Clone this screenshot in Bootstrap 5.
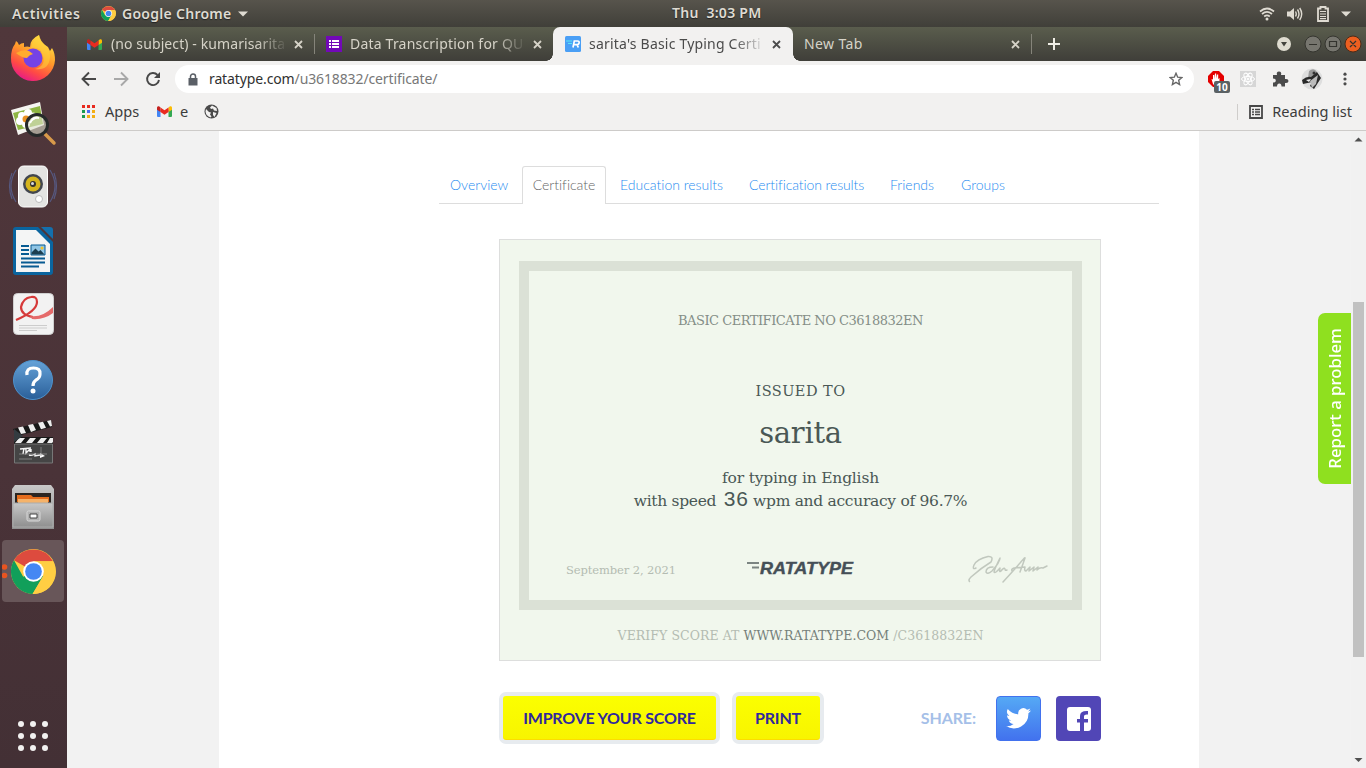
<!DOCTYPE html>
<html lang="en">
<head>
<meta charset="utf-8">
<title>sarita's Basic Typing Certificate</title>
<link href="https://cdn.jsdelivr.net/npm/bootstrap@5.3.0/dist/css/bootstrap.min.css" rel="stylesheet">
<style>
body{width:1366px;height:768px;overflow:hidden;font-family:"Noto Sans","Open Sans",sans-serif;font-size:14px;line-height:20px;color:#3c3c3c;background:#f1f1f1}
svg{display:block;flex:none}
.topbar{height:27px;background:linear-gradient(#57544c,#403f39);color:#dfdbd2;font-weight:600;font-size:14px;padding-left:12px;text-shadow:0 1px 1px #222}
.activities{letter-spacing:.6px;width:68px;white-space:nowrap}
.appname{letter-spacing:.28px;margin-left:6px}
.topbar .clock{left:672px;top:3px;white-space:pre;letter-spacing:.27px}
.dock{width:67px;height:741px;background:linear-gradient(#50373b,#4a3338 60%,#433035);padding:1px 3px 0 2px;gap:2px}
.dock-item{width:62px;height:62px;flex:none}
.dock-item.running{background:#685659;border-radius:4px}
.tabstrip{height:34px;background:linear-gradient(#5a5d4d,#3f3e39);color:#d6d3c8}
.tab-label{white-space:nowrap;overflow:hidden;width:177px;height:20px}
.fade-end{-webkit-mask-image:linear-gradient(90deg,#000 145px,transparent 177px);mask-image:linear-gradient(90deg,#000 145px,transparent 177px)}
.ctab{height:34px;padding-left:12px}
.ctab.active{width:240px;background:#f2f1f0;color:#4b4b4b;border-radius:7px 7px 0 0;position:relative}
.ctab.active::before,.ctab.active::after{content:"";position:absolute;bottom:0;width:7px;height:7px}
.ctab.active::before{left:-7px;background:radial-gradient(circle at 0 0,transparent 6.500px,#f2f1f0 7px)}
.ctab.active::after{right:-7px;background:radial-gradient(circle at 100% 0,transparent 6.500px,#f2f1f0 7px)}
.tabsep{width:1px;height:20px;background:#85847a}
.toolbar{height:36px;background:#f2f1f0}
.omni{width:1019px;height:28px;border-radius:14px;background:#fff;color:#777;letter-spacing:-.12px}
.bookmarks{height:34px;background:#f2f1f0;border-bottom:1px solid #cdcbc9;padding-bottom:4px;font-size:14.6px}
.bookmarks>span{padding-bottom:2px}
.viewport{height:637px;background:#f2f2f2}
.sheet{width:980px;margin-left:152px;background:#fff;padding-left:220px;padding-top:35px}
.profile-tabs{width:720px;height:38px;border-bottom:1px solid #ddd;font:300 14px/38px Lato,"Open Sans",sans-serif;font-variant-ligatures:none}
.profile-tabs a{color:#1f8cf0;text-decoration:none;white-space:nowrap}
.profile-tabs a.current{color:#666;height:38px;width:84px;border:1px solid #ddd;border-bottom:0;background:#fff;border-radius:3px 3px 0 0;text-align:center;line-height:36px}
.cert{width:602px;height:422px;margin:35px 0 0 60px;border:1px solid #dddedd;background:#f1f7ed;padding:21px 18px 0 19px;font-family:"DejaVu Serif","Liberation Serif",serif;color:#4a5855;white-space:nowrap}
.frame{width:563px;height:349px;border:10px solid #dbe1d6;text-align:center}
.ln{height:20px;line-height:20px}
.no{margin-top:40px;font-size:13px;color:#848e87;letter-spacing:-.48px}
.issued{margin-top:50px;font-size:14.5px;letter-spacing:.45px}
.name{margin-top:10px;height:44px;line-height:44px;font-size:29px;letter-spacing:-.3px}
.l1{margin-top:12px;height:22px;line-height:22px;font-size:15.5px;letter-spacing:-.2px}
.l2{height:22px;line-height:21px;font-size:15.5px;letter-spacing:-.3px}
.l2 b{font:21px/20px "Liberation Sans",sans-serif;letter-spacing:.6px;margin-left:3px}
.bottomline{margin-top:42px;height:32px;padding:0 23px 0 37px}
.date{font-size:11.5px;color:#b4bcb2;letter-spacing:-.1px;padding-top:2px}
.verify{margin-top:16px;font-size:12.5px;color:#b4bcb2;text-align:center;letter-spacing:.06px}
.verify b{font-weight:400;color:#75807a}
.actions{margin:31px 0 0 60px;width:602px;font-family:Lato,sans-serif;font-weight:700}
.cta{height:52px;border:4px solid #e7ebef;border-radius:7px;background:linear-gradient(#fbff00,#f8f400);box-shadow:inset 0 -1px #fddc00;color:#30289c;font-size:16px;line-height:44px;text-align:center;padding:0;font-weight:700;letter-spacing:-.2px}
.share{font-size:16px;color:#a5bfe8;letter-spacing:-.1px}
.soc{width:45px;height:45px;border-radius:4px;margin-top:1px}
.tw{background:linear-gradient(#55a9f5,#4272ee);border:1px solid #4272ee}
.fb{background:#5146b6}
.sbar{width:15px;height:637px;background:#f1f1f1}
.thumb{width:11px;height:355px;background:#c1c1c1;top:171px;left:2px}
.report{width:33px;height:171px;left:1251px;top:182px;background:#8fe01f;border-radius:7px 0 0 7px;color:#fff}
.report span{writing-mode:vertical-rl;transform:rotate(180deg);font:500 16.8px/31px "Noto Sans",sans-serif;white-space:nowrap}
.count{left:6px;top:10px;width:16px;height:12px;border-radius:2px;background:#5a6164;color:#fff;font:700 10px/12px "Noto Sans",sans-serif;text-align:center}
</style>
</head>
<body>
<svg width="0" height="0" class="position-absolute"><defs>
<symbol id="chrome" viewBox="0 0 48 48"><circle cx="24" cy="24" r="24" fill="#ffce43"/><path d="M24 24L3.200 12A24 24 0 0 1 44.800 13H24z" fill="#dd4b3e"/><path d="M24 24L13 29.500 3.200 12A24 24 0 0 0 23 48L34.500 29z" fill="#119f5a"/><path d="M24 13H44.800A24 24 0 0 1 23 48L34 29z" fill="#ffce43"/><circle cx="24" cy="24" r="11" fill="#fff"/><circle cx="24" cy="24" r="8.900" fill="#4587f3"/></symbol>
<symbol id="gmail" viewBox="0 0 15 12"><path d="M0 2v9q0 1 1 1h2.500V4z" fill="#4285f4"/><path d="M15 2v9q0 1-1 1h-2.500V4z" fill="#34a853"/><path d="M11.500 1.500L13 .4q2-.8 2 1.600v2l-3.500 2.600z" fill="#fbbc04"/><path d="M3.500 1.500L2 .4Q0-.4 0 2v2l3.500 2.600z" fill="#c5221f"/><path d="M3.500 1.500l4 3 4-3v5.100l-4 3-4-3z" fill="#ea2b20"/></symbol>
<symbol id="x" viewBox="0 0 9 9"><path d="M1 1l7 7M8 1l-7 7" stroke="currentColor" stroke-width="1.800"/></symbol>
</defs></svg>

<header class="topbar d-flex align-items-center position-relative">
  <span class="activities">Activities</span>
  <svg width="15" height="15" style="margin-left:21px"><use href="#chrome"/></svg>
  <span class="appname">Google Chrome</span>
  <svg width="10" height="6" style="margin-left:6px"><path d="M0 .5h10l-5 5z" fill="#dfdbd2"/></svg>
  <span class="clock position-absolute">Thu  3:03 PM</span>
  <div class="d-flex align-items-center ms-auto" style="margin-right:15px">
    <svg width="16" height="16" fill="none" stroke="#dfdbd2" stroke-width="1.700"><path d="M1 5.500Q8-.5 15 5.500M3 8q5-4.300 10 0M5.200 10.500q2.800-2.300 5.600 0"/><circle cx="8" cy="13" r="1.500" fill="#dfdbd2" stroke="none"/></svg>
    <svg width="16" height="14" style="margin-left:12px"><path d="M0 4.500h3L7 1v12L3 9.500H0z" fill="#dfdbd2"/><path d="M8.500 4.500q1.500 2.500 0 5M10.500 2.500q3 4.500 0 9M12.700 1q4 6 0 12" fill="none" stroke="#dfdbd2" stroke-width="1.400"/></svg>
    <svg width="12" height="16" style="margin-left:14px" fill="none" stroke="#dfdbd2"><path d="M1 2.500h2.500V1h5v1.500H11V15H1z" stroke-width="1.800"/><path d="M3 5.500h6M3 8h6M3 10.500h6M3 12.700h6" stroke-width="1.200"/></svg>
    <svg width="10" height="6" style="margin-left:12px"><path d="M0 .5h10l-5 5z" fill="#dfdbd2"/></svg>
  </div>
</header>

<div class="d-flex">
<nav class="dock d-flex flex-column">
  <svg class="dock-item" viewBox="0 0 62 62"><defs><linearGradient id="ff" x1=".8" y1="0" x2=".3" y2="1"><stop offset="0" stop-color="#fff04a"/><stop offset=".45" stop-color="#ff9a2a"/><stop offset=".75" stop-color="#ff4b44"/><stop offset="1" stop-color="#e5188b"/></linearGradient></defs><path d="M9 30q0-9 4-14l1-3q2 1 3 4 2-2 5-2v4q3-1 6 0 0-8 9-12 1 6 6 10l3 2 2 4 2-3q3 5 3 12A22 22 0 0 1 9 30z" fill="url(#ff)"/><circle cx="31" cy="30" r="9.500" fill="#7542e5"/><path d="M14 25q7-4 13-2l4 3q-4 1-6 4-5 0-11-5z" fill="#ffac2d"/><path d="M29 20q10-2 12 8 3 10-8 13 14 2 15-12 0-9-6-13-4-4-5-9-6 4-8 13z" fill="#ffd33a" opacity=".55"/></svg>
  <svg class="dock-item" viewBox="0 0 62 62"><path d="M9 18l29-8 4 23-26 10z" fill="#f5f5f1"/><path d="M11 21l27-7 3 18-25 6z" fill="#8eb643"/><g fill="#fff"><circle cx="20" cy="24" r="4"/><circle cx="26" cy="21" r="4"/><circle cx="18" cy="29" r="4"/><circle cx="24" cy="32" r="4"/><circle cx="31" cy="24" r="3.500"/></g><circle cx="24" cy="27" r="3.500" fill="#e99021"/><path d="M43 42l9 9" stroke="#d89a4a" stroke-width="3.500" stroke-linecap="round"/><circle cx="35" cy="33" r="10.500" fill="#dfe3cf" fill-opacity=".6" stroke="#262a2a" stroke-width="3"/><path d="M28 31q3-6 9-5" stroke="#fff" stroke-width="2" fill="none"/></svg>
  <svg class="dock-item" viewBox="0 0 62 62"><g fill="none" stroke="#56587f" stroke-width="1.200"><path d="M14 14q-10 16 0 32M48 14q10 16 0 32M10 17q-5 13 0 26M52 17q5 13 0 26"/></g><rect x="16.500" y="10" width="29" height="41" rx="5" fill="#e4e4e2" stroke="#fff"/><circle cx="31" cy="28" r="10" fill="#42474e"/><circle cx="31" cy="28" r="7.500" fill="#d5b51d"/><circle cx="31" cy="28" r="3" fill="#333"/><circle cx="30.500" cy="27.500" r="1.500" fill="#ddd"/><circle cx="37" cy="43" r="3.500" fill="#fff" stroke="#bbb"/></svg>
  <svg class="dock-item" viewBox="0 0 62 62"><path d="M14 7h22l15 15v30q0 3-3 3H14q-3 0-3-3V10q0-3 3-3z" fill="#0a659f"/><path d="M39 7h9q3 0 3 3v9z" fill="#1470ad"/><path d="M14 10h20l14 14v28H14z" fill="#f4f5f5"/><path d="M19 26h8M19 30h8M19 34h8M19 38.500h24M19 42.500h24M19 46.500h18" stroke="#075b92" stroke-width="2"/><path d="M29 25h14v10H29z" fill="#8fc5e5" stroke="#075b92"/><path d="M29.500 34.500v-2l4-4 3 3 2-1.500 4 4.500z" fill="#1b3e50"/><circle cx="40" cy="28" r="1.500" fill="#f3c42b"/></svg>
  <svg class="dock-item" viewBox="0 0 62 62"><rect x="11.500" y="9.500" width="40" height="41" rx="4" fill="#f2f2f2" stroke="#d0d0d0"/><path d="M14 36Q35 27 35 18q0-6-6-5-8 1-10 10 0 8 12 10" fill="none" stroke="#d63a3a" stroke-width="2.200"/><path d="M28 32q12 2 23-9v6q-9 7-21 6z" fill="#e56a6a"/><path d="M17 41.500h28M17 44h28M17 46.500h18" stroke="#ccc"/></svg>
  <svg class="dock-item" viewBox="0 0 62 62"><defs><linearGradient id="hb" x2="0" y2="1"><stop stop-color="#65a2d8"/><stop offset="1" stop-color="#2a5f99"/></linearGradient></defs><circle cx="31" cy="32" r="19.500" fill="url(#hb)" stroke="#4d93ce"/><path d="M25 27q-1-7 6.500-7 7 0 6.500 6 0 4-4 6-3 2-3 6" fill="none" stroke="#fff" stroke-width="3.200"/><circle cx="31" cy="43" r="2.500" fill="#fff"/></svg>
  <svg class="dock-item" viewBox="0 0 62 62"><path d="M11 17L49 8l1 7-35 9z" fill="#191919"/><path d="M16 15.500l5-1 3 6.500-5 1zM26 13l5-1 3 6-5 2zM36 10.800l5-1 3 6-5 1.500zM45 9l4-1 1 6-2 .5z" fill="#eee"/><path d="M12 25h39v7H12z" fill="#191919"/><path d="M17 26h6l-4 5h-6zM28 26h6l-4 5h-6zM39 26h6l-4 5h-6zM48 26h3v4l-1 1h-5z" fill="#eee"/><path d="M12.500 32h38v19h-38z" fill="#454545" stroke="#777"/><path d="M12 17l9 7-9 6z" fill="#333b40"/><path d="M18 37l11-1M22 36l-1 6M24 37v4l4-4v3M29 37v3M27 43q3 1 6-1v2l5-1" fill="none" stroke="#f5f5f5" stroke-width="1.400"/><path d="M38 41l5 3-5 2z" fill="#fff"/><path d="M17 42h28M17 47h13M39 35v9" stroke="#999" stroke-width=".7"/></svg>
  <svg class="dock-item" viewBox="0 0 62 62"><defs><linearGradient id="fc" x2="0" y2="1"><stop stop-color="#c8c8c8"/><stop offset="1" stop-color="#8f8f8f"/></linearGradient></defs><path d="M13 9h36l3 4v40H10V13z" fill="url(#fc)"/><path d="M13 17h36v10H13z" fill="#2b2521"/><path d="M15 19h14l2 2h16v5H15z" fill="#e56d1d"/><path d="M16 23h30v4H16z" fill="#f5b36a"/><path d="M11 27h40v24H11z" fill="url(#fc)" stroke="#aaa"/><rect x="25" y="35" width="13" height="10" rx="1.500" fill="#b1b1b1" stroke="#d8d8d8"/><path d="M28 38h7v4h-7z" fill="#fff" stroke="#444"/></svg>
  <div class="dock-item running d-flex align-items-center">
    <svg width="7" height="20"><circle cx="2.500" cy="6" r="2.800" fill="#e95420"/><circle cx="2.500" cy="14.500" r="2.800" fill="#e95420"/></svg>
    <svg width="45" height="45" style="margin-left:2px"><use href="#chrome"/></svg>
  </div>
  <svg class="dock-item mt-auto" viewBox="0 0 62 62"><g fill="#f2f1f0"><circle cx="19" cy="30" r="3"/><circle cx="31" cy="30" r="3"/><circle cx="43" cy="30" r="3"/><circle cx="19" cy="42" r="3"/><circle cx="31" cy="42" r="3"/><circle cx="43" cy="42" r="3"/><circle cx="19" cy="18" r="3"/><circle cx="31" cy="18" r="3"/><circle cx="43" cy="18" r="3"/></g></svg>
</nav>

<div class="flex-grow-1">
  <div class="tabstrip d-flex align-items-center">
    <div class="d-flex align-items-center" style="width:247px;padding-left:20px">
      <svg width="15" height="11" viewBox="0 0 15 12" preserveAspectRatio="none"><use href="#gmail"/></svg>
      <div class="tab-label fade-end" style="margin-left:9px;letter-spacing:.1px">(no subject) - kumarisarita</div>
      <svg width="9" height="9" style="margin-left:6px"><use href="#x"/></svg>
    </div>
    <div class="tabsep"></div>
    <div class="d-flex align-items-center" style="width:238px;padding-left:11px">
      <svg width="16" height="16"><path d="M0 0h16v16H0z" fill="#7209b7"/><path d="M3 4h2v2H3zM3 7h2v2H3zM3 10h2v2H3zM6 4h7v2H6zM6 7h7v2H6zM6 10h7v2H6z" fill="#fff"/></svg>
      <div class="tab-label fade-end" style="margin-left:8px;width:178px;letter-spacing:.2px">Data Transcription for QU</div>
      <svg width="9" height="9" style="margin-left:5px"><use href="#x"/></svg>
    </div>
    <div class="ctab active d-flex align-items-center">
      <svg width="16" height="16"><rect width="16" height="16" rx="1.500" fill="#4a9ff5"/><path d="M1 5h6M3 7.500h4" stroke="#56e8f5" stroke-width="1.200"/><path d="M8 11.500L9.300 5h3.200q2 0 1.600 2-.3 1.500-2 1.700l1.200 2.800M9 8.700h3" stroke="#fff" stroke-width="1.700" fill="none"/></svg>
      <div class="tab-label fade-end" style="margin-left:8px;letter-spacing:.2px">sarita's Basic Typing Certi</div>
      <svg width="9" height="9" style="margin-left:6px"><use href="#x"/></svg>
    </div>
    <span style="margin-left:11px;width:207px;letter-spacing:.4px">New Tab</span>
    <svg width="9" height="9"><use href="#x"/></svg>
    <div class="tabsep" style="margin-left:11px"></div>
    <svg width="12" height="12" style="margin-left:16px"><path d="M6 0v12M0 6h12" stroke="#f0eee6" stroke-width="2"/></svg>
    <div class="d-flex align-items-center ms-auto" style="margin-right:4px">
      <svg width="14" height="14" style="margin-right:13px"><circle cx="7" cy="7" r="7" fill="#dfdcd0"/><path d="M4 5h6l-3 4.500z" fill="#44443d"/></svg>
      <svg width="58" height="18" fill="none"><circle cx="9" cy="9" r="8" fill="#77766f" stroke="#35352f"/><circle cx="29" cy="9" r="8" fill="#77766f" stroke="#35352f"/><circle cx="49" cy="9" r="8" fill="#ed5f20" stroke="#4b2b19"/><path d="M5 9.500h8M25.500 6.500h7v5h-7zM46 6l6 6M52 6l-6 6" stroke="#33332e" stroke-width="1.200"/></svg>
    </div>
  </div>

  <div class="toolbar d-flex align-items-center">
    <svg width="108" height="20" fill="none" stroke="#484848" stroke-width="1.900"><path d="M29 10H16M22 3.500L15.500 10l6.500 6.500"/><path d="M47 10h13M54 3.500l6.500 6.500-6.500 6.500" stroke="#a8a8a8"/><path d="M90.500 6A6 6 0 1 0 92 11"/><path d="M93 3v6h-6z" fill="#484848" stroke="none"/></svg>
    <div class="omni d-flex align-items-center">
      <svg width="10" height="13" style="margin-left:13px"><path d="M.5 5h9v7.500h-9z" fill="#5a5f66"/><path d="M2.500 5.500V3.500a2.500 2.500 0 0 1 5 0v2" fill="none" stroke="#5a5f66" stroke-width="1.500"/></svg>
      <span style="margin-left:11px"><span style="color:#303030">ratatype.com</span>/u3618832/certificate/</span>
      <svg class="ms-auto" width="14" height="14" style="margin-right:11px" viewBox="0 0 14 14"><path d="M7 1.300l1.700 3.900 4.100.4-3.100 2.700.9 4.200L7 10.300l-3.600 2.200.9-4.200L1.200 5.600l4.100-.4z" fill="none" stroke="#666" stroke-width="1.400"/></svg>
    </div>
    <div class="position-relative" style="margin-left:14px">
      <svg width="16" height="16"><path d="M5 0h6l5 5v6l-5 5H5l-5-5V5z" fill="#e40000"/><path d="M5 13L3.500 8l1.500.5V4h1.200v4L7 2.500h1.200v5L9 3.500h1.200V8l1.300-1v4l-2 3H6z" fill="#fff"/></svg>
      <span class="count position-absolute">10</span>
    </div>
    <svg width="16" height="16" style="margin-left:16px" fill="none" stroke="#fff"><path d="M0 0h16v16H0z" fill="#d6d6d6" stroke="none"/><ellipse cx="8" cy="8" rx="6.500" ry="2.600"/><ellipse cx="8" cy="8" rx="6.500" ry="2.600" transform="rotate(60 8 8)"/><ellipse cx="8" cy="8" rx="6.500" ry="2.600" transform="rotate(120 8 8)"/><circle cx="8" cy="8" r="1" fill="#fff"/></svg>
    <svg width="16" height="16" style="margin-left:17px"><path d="M0 4h4q-1-3.500 2-3.500T8 4h4v4q3.500-.5 3.500 2T12 12v3.500H8.500q0-3-2.200-3T4 15.500H0v-4q2.800 0 2.800-2T0 7.500z" fill="#4b4b4b"/></svg>
    <svg width="22" height="22" style="margin-left:12px"><circle cx="11" cy="11" r="10.500" fill="#dedede"/><path d="M8 3q5-4 8 1l-2 7-5 2-2-3z" fill="#999"/><path d="M1 12q5-4 9-3l6-5 4 6-7 11-4-3 2-4-9 2z" fill="#2a2a2a"/><path d="M9 13l8-6-2 9-4 4z" fill="#bbb"/><path d="M5 12l5-1-2 3z" fill="#eee"/><circle cx="13" cy="5" r="1.500" fill="#333"/></svg>
    <svg width="4" height="16" style="margin-left:20px" fill="#4b4b4b"><circle cx="2" cy="3.200" r="1.600"/><circle cx="2" cy="8" r="1.600"/><circle cx="2" cy="12.800" r="1.600"/></svg>
  </div>

  <div class="bookmarks d-flex align-items-center">
    <svg width="14" height="14" style="margin-left:15px"><g fill="#e82a1e"><path d="M0 0h3v3H0zM5 0h3v3H5zM10 0h3v3h-3z"/></g><path d="M0 5h3v3H0zM0 10h3v3H0z" fill="#1a9b50"/><path d="M5 5h3v3H5z" fill="#4a6cf5"/><path d="M10 5h3v3h-3zM5 10h3v3H5zM10 10h3v3h-3z" fill="#f3ae13"/></svg>
    <span style="margin-left:9px;width:52px">Apps</span>
    <svg width="15" height="11" viewBox="0 0 15 12" preserveAspectRatio="none"><use href="#gmail"/></svg>
    <span style="margin-left:8px;width:24px">e</span>
    <svg width="15" height="15"><circle cx="7.500" cy="7.500" r="7" fill="#4a4a4a"/><path d="M2 5l3 3 2 .5-1 2 1.500 2-1 1Q2 12 1.500 7.500zM8 1.500l-2 2 1 1.500 2-.5 1 2 3 .5-.5-3zM9 8l3.500 1-2 4-1.500-2z" fill="#f2f1f0"/></svg>
    <div class="ms-auto" style="width:1px;height:16px;background:#cfcdcb"></div>
    <svg width="14" height="14" style="margin-left:11px" stroke="#484848" fill="none"><path d="M1 1h12v12H1z" stroke-width="1.800"/><path d="M3 4.500h2M3 7h2M3 9.500h2M6 4.500h5M6 7h5M6 9.500h5" stroke-width="1.400"/></svg>
    <span style="margin-left:9px;margin-right:14px">Reading list</span>
  </div>

  <main class="viewport d-flex position-relative">
    <section class="sheet">
      <nav class="profile-tabs d-flex">
        <a style="margin-left:11px;width:72px" href="#">Overview</a>
        <a class="current" href="#">Certificate</a>
        <a style="margin-left:14px;width:129px" href="#">Education results</a>
        <a style="width:141px;letter-spacing:-.1px" href="#">Certification results</a>
        <a style="width:71px" href="#">Friends</a>
        <a href="#">Groups</a>
      </nav>
      <article class="cert">
        <div class="frame d-flex flex-column">
          <div class="ln no">BASIC CERTIFICATE NO C3618832EN</div>
          <div class="ln issued">ISSUED TO</div>
          <div class="name">sarita</div>
          <div class="l1">for typing in English</div>
          <div class="l2">with speed <b>36</b> wpm and accuracy of 96.7%</div>
          <div class="bottomline d-flex align-items-center">
            <span class="date" style="width:180px;text-align:left">September 2, 2021</span>
            <svg width="112" height="28"><path d="M1 8h12M6 12.500h7" stroke="#7c8582" stroke-width="2"/><text x="14" y="18.500" font-family="Liberation Sans" font-weight="700" font-style="italic" font-size="17" fill="#454f57" stroke="#454f57" stroke-width=".4" textLength="93" lengthAdjust="spacingAndGlyphs">RATATYPE</text></svg>
            <svg class="ms-auto" width="82" height="30" fill="none" stroke="#c1c8be" stroke-width="1.500" stroke-linecap="round" stroke-linejoin="round"><path d="M2.500 27.500Q1 26 4 23 14 14 24 8 27 2 21 2.500 10 5 7 11 5 16 9 14M26 13Q19 13 19 18 20 21 25 17 33 8 33 4 28 14 27 18 28 20 33 14 32 19 34 17 37 13 38 15 38 17 40 16M36 28Q46 17 53 9 58 3 58 4 56 10 53 18M45 17Q44 15 47 14L58 13Q57 17 59 17L63 13 62 17 67 13 66 17 71 13 70 16Q73 13 76 14L80 12"/></svg>
          </div>
        </div>
        <div class="ln verify">VERIFY SCORE AT <b>WWW.RATATYPE.COM</b> /C3618832EN</div>
      </article>
      <div class="actions d-flex align-items-center">
        <a class="btn cta" style="width:221px">IMPROVE YOUR SCORE</a>
        <a class="btn cta" style="width:92px;margin-left:12px">PRINT</a>
        <span class="share ms-auto" style="margin-right:20px">SHARE:</span>
        <div class="soc tw d-flex align-items-center justify-content-center"><svg width="25" height="21" viewBox="0 0 24 20"><path d="M24 2.400a9 9 0 0 1-2.800.8 5 5 0 0 0 2.100-2.700 10 10 0 0 1-3.100 1.200A4.900 4.900 0 0 0 11.800 6 14 14 0 0 1 1.700.9a4.900 4.900 0 0 0 1.500 6.500A5 5 0 0 1 1 6.800a5 5 0 0 0 3.900 4.900 5 5 0 0 1-2.200.1 5 5 0 0 0 4.600 3.400A10 10 0 0 1 0 17.300 14 14 0 0 0 21.500 5 10 10 0 0 0 24 2.400z" fill="#fff"/></svg></div>
        <div class="soc fb d-flex align-items-center justify-content-center" style="margin-left:15px"><svg width="24" height="24"><rect width="24" height="24" rx="3" fill="#fff"/><path d="M13 24v-8.500h-3V12h3V9q0-5.500 8-5V7.500q-4-.5-4 2V12h4v3.500h-4V24z" fill="#5146b6"/></svg></div>
      </div>
    </section>
    <aside class="sbar position-relative ms-auto">
      <div class="thumb position-absolute"></div>
      <svg width="15" height="637"><path d="M3.500 10.500l4-4 4 4zM3.500 627l4 4 4-4z" fill="#505050"/></svg>
    </aside>
    <div class="report position-absolute d-flex align-items-center justify-content-center"><span>Report a problem</span></div>
  </main>
</div>
</div>
<script src="https://cdn.jsdelivr.net/npm/bootstrap@5.3.0/dist/js/bootstrap.bundle.min.js"></script>
</body>
</html>
